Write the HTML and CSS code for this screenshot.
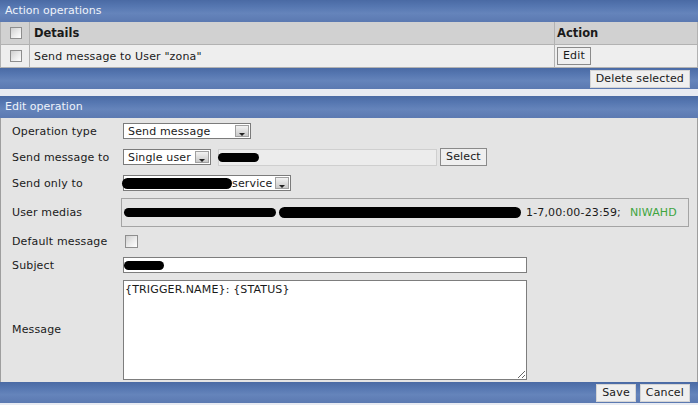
FILE: index.html
```html
<!DOCTYPE html>
<html>
<head>
<meta charset="utf-8">
<link rel="stylesheet" href="styles.css">
</head>
<body>
<div class="page">
  <section class="panel">
    <div class="bar title">Action operations</div>
    <table class="grid">
      <thead>
        <tr>
          <th class="cbcol"><span class="chk"></span></th>
          <th class="details">Details</th>
          <th class="actcol">Action</th>
        </tr>
      </thead>
      <tbody>
        <tr>
          <td class="cbcol"><span class="chk"></span></td>
          <td class="details">Send message to User "zona"</td>
          <td class="actcol"><button class="btn dark">Edit</button></td>
        </tr>
      </tbody>
    </table>
    <div class="bar foot"><button class="btn light">Delete selected</button></div>
  </section>

  <section class="panel">
    <div class="bar title">Edit operation</div>
    <div class="form">
      <div class="lbl">Operation type</div>
      <div class="ctl"><span class="sel w128"><span class="txt">Send message</span><span class="arr"><svg width="14" height="13" viewBox="0 0 14 13"><path d="M4 8h6l-3 3z" fill="#222"/></svg></span></span></div>

      <div class="lbl">Send message to</div>
      <div class="ctl">
        <span class="sel w88"><span class="txt">Single user</span><span class="arr"><svg width="14" height="13" viewBox="0 0 14 13"><path d="M4 8h6l-3 3z" fill="#222"/></svg></span></span>
        <span class="dinput"><span class="blob b41"></span></span>
        <button class="btn dark sel-btn">Select</button>
      </div>

      <div class="lbl">Send only to</div>
      <div class="ctl"><span class="sel w168"><span class="txt"><span class="blob b110"></span>service</span><span class="arr"><svg width="14" height="13" viewBox="0 0 14 13"><path d="M4 8h6l-3 3z" fill="#222"/></svg></span></span></div>

      <div class="lbl">User medias</div>
      <div class="ctl"><div class="medias"><span class="blob b152"></span><span class="blob b242"></span><span class="period">1-7,00:00-23:59;</span><span class="sev">NIWAHD</span></div></div>

      <div class="lbl">Default message</div>
      <div class="ctl"><span class="chk big"></span></div>

      <div class="lbl">Subject</div>
      <div class="ctl"><div class="tinput"><span class="blob b40"></span></div></div>

      <div class="lbl">Message</div>
      <div class="ctl"><textarea class="msg">{TRIGGER.NAME}: {STATUS}</textarea></div>
    </div>
    <div class="bar foot"><button class="btn light">Save</button><button class="btn light">Cancel</button></div>
  </section>
</div>
</body>
</html>
```

FILE: styles.css
```css
html, body {
  margin: 0;
  padding: 0;
  background: #e8ebf2;
}
body {
  font-family: "DejaVu Sans", Verdana, sans-serif;
  font-size: 11px;
  letter-spacing: 0.15px;
  color: #1a1a1a;
  width: 698px;
  height: 405px;
  overflow: hidden;
}
.page {
  display: flex;
  flex-direction: column;
  gap: 7px;
}
.panel {
  display: flex;
  flex-direction: column;
}
.bar {
  background: linear-gradient(to bottom, #4a6aa4 0%, #5677b1 30%, #6584bb 60%, #5b79b1 100%);
  box-sizing: border-box;
}
.title {
  height: 22px;
  line-height: 22px;
  padding-left: 5px;
  color: #eef2fa;
  letter-spacing: 0;
}
.foot {
  height: 21px;
  display: flex;
  justify-content: flex-end;
  align-items: center;
  gap: 4px;
  padding-right: 8px;
}
.grid {
  border-collapse: collapse;
  width: 100%;
  border-left: 1px solid #a3a3a3;
  border-right: 1px solid #a3a3a3;
}
.grid th, .grid td {
  padding: 0;
  border: 1px solid #b2b2b2;
  border-top: none;
  text-align: left;
  vertical-align: middle;
}
.grid th {
  background: #d1d1d1;
  height: 22px;
  font-weight: bold;
  font-size: 11.5px;
  letter-spacing: 0;
}
.grid td {
  background: #eeeeee;
  height: 22px;
}
.cbcol {
  width: 28px;
  text-align: center !important;
}
.cbcol .chk {
  margin-left: 9px;
}
.details {
  padding-left: 4px !important;
}
.actcol {
  width: 140px;
  padding-left: 2px !important;
}
.chk {
  display: block;
  width: 12px;
  height: 12px;
  box-sizing: border-box;
  border: 1px solid #8e8e8e;
  background: linear-gradient(135deg, #cfcfcf 0%, #e9e9e9 50%, #ffffff 100%);
}
.chk.big {
  width: 13px;
  height: 13px;
  margin-left: 2px;
}
.btn {
  font-family: "DejaVu Sans", Verdana, sans-serif;
  font-size: 11px;
  letter-spacing: 0.15px;
  color: #1a1a1a;
  background: #efefef;
  box-sizing: border-box;
  height: 18px;
  padding: 0 5px;
  margin: 0;
  line-height: 16px;
}
.btn.dark {
  border: 1px solid #8a8a8a;
}
.btn.light {
  border: 1px solid #d4d4d4;
  height: 18px;
}
.form {
  display: grid;
  grid-template-columns: 122px 1fr;
  grid-template-rows: 26px 26px 26px 33px 24px 24px 105px;
  background: #e4e4e4;
  border-left: 1px solid #9e9e9e;
  border-right: 1px solid #9e9e9e;
}
.lbl {
  padding-left: 11px;
  align-self: center;
}
.ctl {
  align-self: center;
  display: flex;
  align-items: center;
}
.sel {
  display: inline-flex;
  align-items: center;
  justify-content: space-between;
  box-sizing: border-box;
  height: 16px;
  border: 1px solid #7b7b7b;
  background: #fff;
  padding: 0 1px 0 4px;
}
.sel .txt {
  display: flex;
  align-items: center;
  white-space: nowrap;
}
.w128 { width: 128px; }
.w88 { width: 88px; }
.w168 { width: 168px; padding-left: 0; }
.arr {
  display: block;
  width: 14px;
  height: 12px;
  box-sizing: border-box;
  border: 1px solid #a0a0a0;
  background: linear-gradient(to bottom, #f2f2f2, #c9c9c9);
  overflow: hidden;
}
.arr svg {
  display: block;
  margin: -1px 0 0 -1px;
}
.dinput {
  display: flex;
  align-items: center;
  box-sizing: border-box;
  width: 219px;
  height: 17px;
  margin-left: 7px;
  border: 1px solid #cfcfcf;
  background: #ececec;
}
.sel-btn {
  margin-left: 3px;
}
.blob {
  display: inline-block;
  background: #000;
  border-radius: 6px;
  height: 9px;
}
.b41 { width: 41px; margin-left: -1px; }
.b110 { width: 110px; height: 11px; margin-left: -2px; }
.b152 { width: 152px; }
.b242 { width: 242px; height: 11px; margin-left: 3px; }
.b40 { width: 40px; }
.medias {
  display: flex;
  align-items: center;
  box-sizing: border-box;
  width: 568px;
  height: 29px;
  margin-left: -2px;
  border: 1px solid #a4a4a4;
  padding-left: 2px;
  white-space: nowrap;
}
.period {
  margin-left: 5px;
}
.sev {
  margin-left: 9px;
  color: #3ea53e;
}
.tinput {
  display: flex;
  align-items: center;
  box-sizing: border-box;
  width: 404px;
  height: 16px;
  border: 1px solid #7d7d7d;
  background: #fff;
}
.msg {
  box-sizing: border-box;
  width: 404px;
  height: 100px;
  margin: 0;
  border: 1px solid #7d7d7d;
  background: #fff;
  font-family: "DejaVu Sans", Verdana, sans-serif;
  font-size: 11px;
  letter-spacing: 0.15px;
  color: #1a1a1a;
  padding: 2px 1px;
  resize: both;
}
```
